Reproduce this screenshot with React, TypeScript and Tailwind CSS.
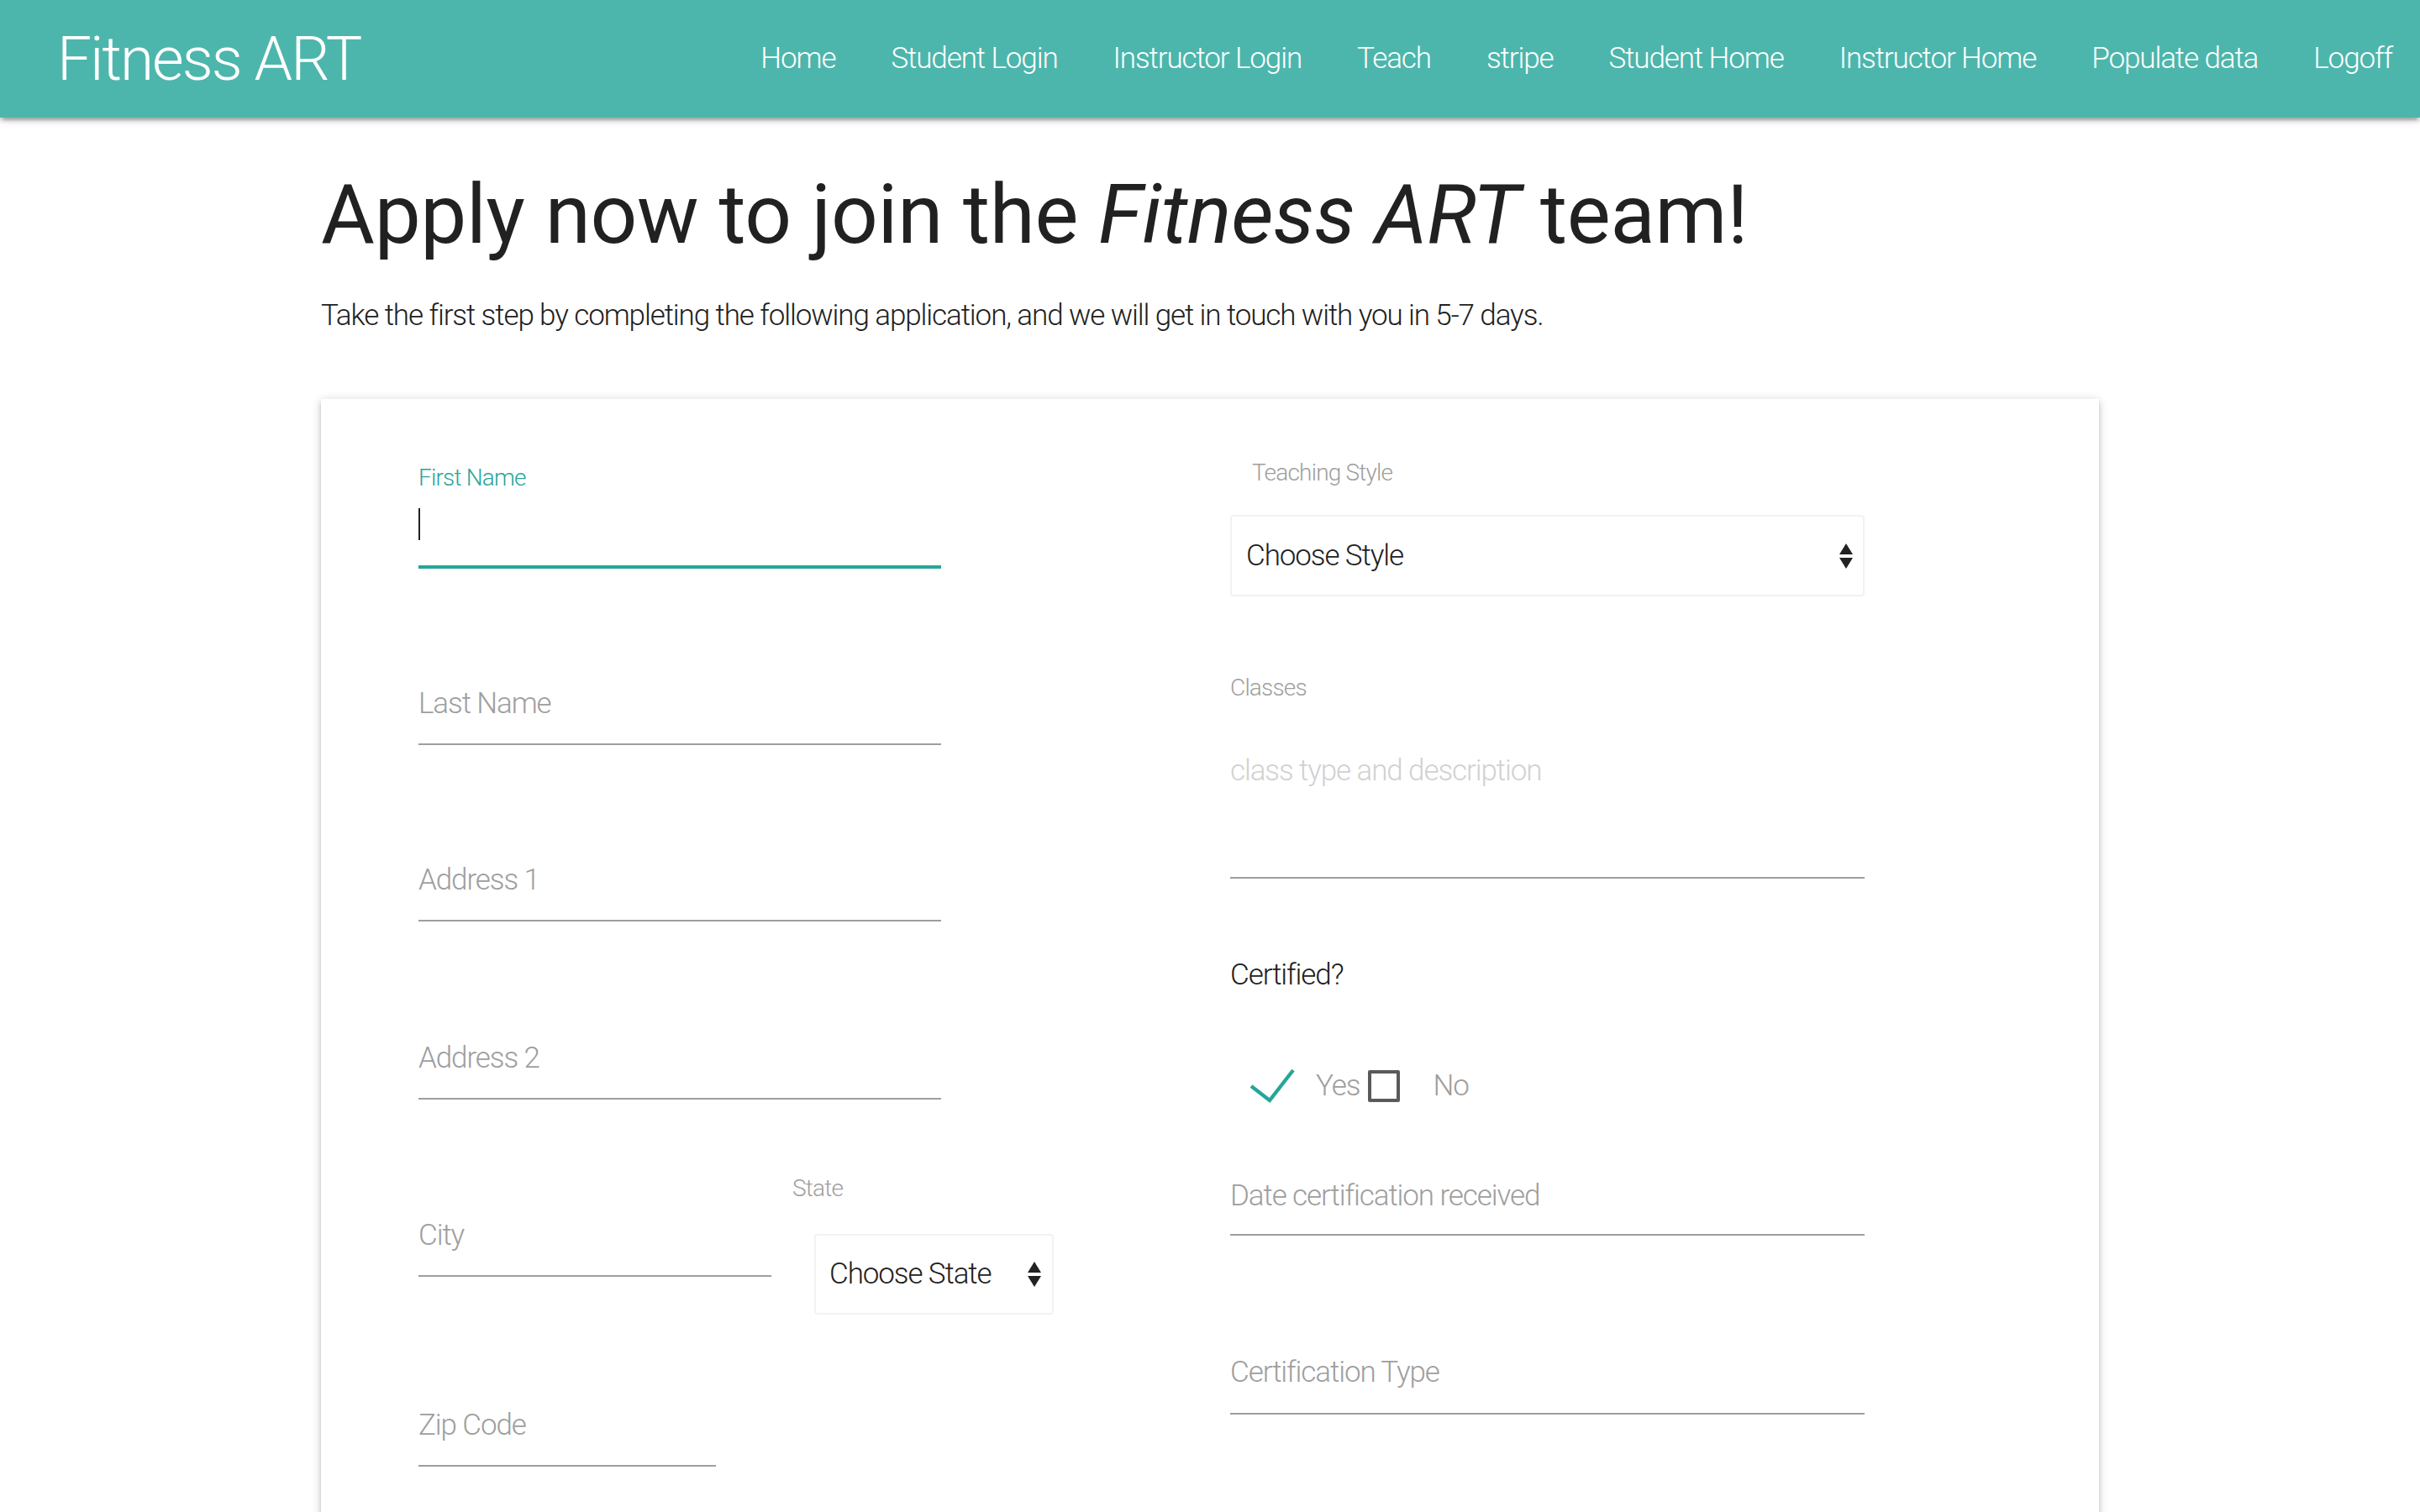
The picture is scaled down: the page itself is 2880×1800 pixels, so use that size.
const links = [
  'Home',
  'Student Login',
  'Instructor Login',
  'Teach',
  'stripe',
  'Student Home',
  'Instructor Home',
  'Populate data',
  'Logoff',
]

const zDepth =
  'shadow-[0_4px_4px_0_rgba(0,0,0,0.14),0_7px_2px_-4px_rgba(0,0,0,0.12),0_2px_11px_0_rgba(0,0,0,0.2)]'

function Arrows() {
  return (
    <svg width="16" height="30" viewBox="0 0 16 30" className="shrink-0">
      <polygon points="0,13 8,0 16,13" fill="#222" />
      <polygon points="0,17 16,17 8,30" fill="#222" />
    </svg>
  )
}

function Field({ label, width = 'w-[622px]', pb = 'pb-[25px]', className = '' }: { label: string; width?: string; pb?: string; className?: string }) {
  return (
    <div className={`${width} pt-[3px] ${pb} ${className} border-b-2 border-[#9e9e9e] text-[35px] leading-[44px] font-light text-[#9e9e9e]`}>
      {label}
    </div>
  )
}

export default function App() {
  return (
    <div className="min-h-screen bg-white font-['Roboto','Liberation_Sans',sans-serif] tracking-[-1.1px] text-[#212121]">
      <nav className={`relative z-10 h-[140px] bg-[#4db6ac] flex items-center justify-between ${zDepth}`}>
        <a className="pl-[68px] text-[73px] leading-[140px] font-light tracking-[-2px] text-white">Fitness ART</a>
        <ul className="flex">
          {links.map((l) => (
            <li key={l}>
              <a className="block px-[33px] text-[35px] leading-[136px] font-light text-white">{l}</a>
            </li>
          ))}
        </ul>
      </nav>

      <main className="w-[2116px] mx-auto">
        <h3 className="mt-[62px] text-[98px] leading-[108px] font-normal tracking-[-0.3px] text-[#212121]">
          Apply now to join the <em>Fitness ART</em> team!
        </h3>
        <p className="mt-[40px] text-[35px] leading-[52px] font-light text-[#212121]">
          Take the first step by completing the following application, and we will get in touch with you in 5-7 days.
        </p>

        <div className={`mt-[73px] bg-white flex pl-[116px] pb-[200px] ${zDepth}`}>
          {/* left column */}
          <div className="w-[966px] flex flex-col">
            <div className="mt-[77px] text-[28px] leading-[34px] font-light tracking-[-0.8px] text-[#26a69a]">First Name</div>
            <div className="w-[622px] h-[91px] pt-[19px] border-b-4 border-[#26a69a]">
              <div className="w-[2px] h-[38px] bg-[#212121]" />
            </div>

            <Field label="Last Name" className="mt-[136px]" />
            <Field label="Address 1" className="mt-[136px]" />
            <Field label="Address 2" className="mt-[138px]" />

            <div className="mt-[86px] flex items-start">
              <Field label="City" width="w-[420px]" className="mt-[51px]" />
              <div className="ml-[25px] flex flex-col">
                <div className="pt-[3px] text-[28px] leading-[34px] font-light tracking-[-0.8px] text-[#9e9e9e]">State</div>
                <div className="mt-[37px] ml-[26px] w-[285px] h-[96px] flex items-center justify-between pl-[16px] pr-[13px] border-2 border-[#f2f2f2] rounded-[4px]">
                  <span className="text-[35px] leading-[44px] font-light text-[#212121]">Choose State</span>
                  <Arrows />
                </div>
              </div>
            </div>

            <Field label="Zip Code" width="w-[354px]" className="mt-[107px]" />
          </div>

          {/* right column */}
          <div className="w-[755px] flex flex-col">
            <div className="mt-[71px] ml-[26px] text-[28px] leading-[34px] font-light tracking-[-0.8px] text-[#9e9e9e]">Teaching Style</div>
            <div className="mt-[33px] h-[97px] flex items-center justify-between pl-[17px] pr-[12px] border-2 border-[#f2f2f2] rounded-[4px]">
              <span className="text-[35px] leading-[44px] font-light text-[#212121]">Choose Style</span>
              <Arrows />
            </div>

            <div className="mt-[92px] text-[28px] leading-[34px] font-light tracking-[-0.8px] text-[#9e9e9e]">Classes</div>
            <div className="mt-[58px] pt-[2px] pb-[104px] border-b-2 border-[#9e9e9e] text-[35px] leading-[44px] font-light text-[#d1d1d1]">
              class type and description
            </div>

            <div className="mt-[93px] text-[35px] leading-[44px] font-light text-[#212121]">Certified?</div>

            <div className="mt-[88px] h-[44px] flex items-center text-[35px] leading-[44px] font-light text-[#9e9e9e]">
              <svg width="54" height="42" viewBox="0 0 54 42" className="ml-[23px] shrink-0">
                <polyline points="2,21 24,38 52,2" fill="none" stroke="#26a69a" strokeWidth="4.4" />
              </svg>
              <span className="ml-[25px]">Yes</span>
              <span className="ml-[10px] w-[38px] h-[38px] border-4 border-[#5a5a5a] rounded-[2px] shrink-0" />
              <span className="ml-[39px]">No</span>
            </div>

            <Field label="Date certification received" width="w-full" pb="pb-[23px]" className="mt-[84px]" />
            <Field label="Certification Type" width="w-full" pb="pb-[26px]" className="mt-[138px]" />
          </div>
        </div>
      </main>
    </div>
  )
}
